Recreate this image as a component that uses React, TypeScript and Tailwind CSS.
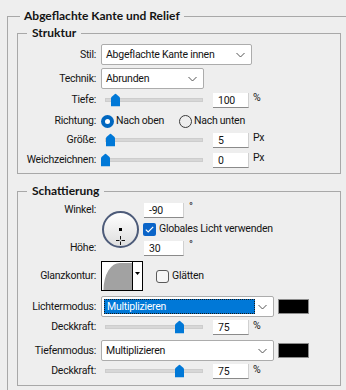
import React from "react";

function Chevron() {
  return (
    <svg width="9" height="5" viewBox="0 0 9 5" className="absolute right-[6px] top-1/2 -translate-y-1/2">
      <polyline points="0.5,0.5 4.5,4.5 8.5,0.5" fill="none" stroke="#555" strokeWidth="1" />
    </svg>
  );
}

function Label({ children }: { children: React.ReactNode }) {
  return <div className="w-[78px] shrink-0 text-right whitespace-nowrap">{children}</div>;
}

function Slider({ pos }: { pos: number }) {
  return (
    <div className="relative ml-[9px] w-[98px] h-full flex items-center shrink-0">
      <div className="w-full h-[4px] bg-[#d7d7d7] border border-[#cdcdcd]" />
      <svg width="9" height="13" viewBox="0 0 9 13" className="absolute top-1/2 -translate-y-1/2" style={{ left: pos }}>
        <path d="M4.5 0 L8.5 3.5 Q9 4 9 5 V13 H0 V5 Q0 4 0.5 3.5 Z" fill="#0078d7" />
      </svg>
    </div>
  );
}

function Num({ value, w = "w-[36px]" }: { value: string; w?: string }) {
  return (
    <div className={`${w} h-[15px] bg-white border-b border-r border-b-[#8a8a8a] border-r-[#d0d0d0] pl-[5px] leading-[15px] shrink-0`}>
      {value}
    </div>
  );
}

function SliderRow({ label, pos, value, unit, h }: { label: string; pos: number; value: string; unit: string; h: string }) {
  return (
    <div className={`flex items-center ${h}`}>
      <Label>{label}</Label>
      <Slider pos={pos} />
      <div className="ml-[10px]">
        <Num value={value} />
      </div>
      <div className="ml-[4px] self-start leading-[14px]">{unit}</div>
    </div>
  );
}

function Dropdown({ text, w, selected }: { text: string; w: string; selected?: boolean }) {
  return (
    <div className={`relative ml-[5px] h-[21px] bg-white border border-[#acacac] rounded-[2px] flex items-center shrink-0 ${w}`}>
      {selected ? (
        <div className="absolute left-[2px] top-[2px] bottom-[2px] right-[18px] bg-[#0078d7] border border-dotted border-[#1a1a1a] text-white pl-[2px] flex items-center">
          {text}
        </div>
      ) : (
        <div className="pl-[4px]">{text}</div>
      )}
      <Chevron />
    </div>
  );
}

function Swatch() {
  return <div className="ml-[4px] w-[31px] h-[15px] bg-black border border-[#8c8c8c] shrink-0" />;
}

function CheckedBox() {
  return (
    <div className="w-[13px] h-[13px] rounded-[2px] bg-[#0a64c8] flex items-center justify-center shrink-0">
      <svg width="9" height="7" viewBox="0 0 9 7">
        <polyline points="0.8,3.6 3.2,5.9 8.2,0.8" fill="none" stroke="white" strokeWidth="1.2" />
      </svg>
    </div>
  );
}

function EmptyBox() {
  return <div className="w-[13px] h-[13px] rounded-[3px] border border-[#5a5a5a] bg-[#f6f6f6] shrink-0" />;
}

export default function App() {
  return (
    <div className="w-[346px] h-[390px] overflow-hidden bg-[#eeeeee] text-[10.5px] tracking-[-0.25px] text-[#141414] font-['Roboto','Liberation_Sans',sans-serif] pt-[8px]">
      <fieldset className="ml-[7px] w-[360px] border border-[#a8a8a8] pb-[20px]">
        <legend className="ml-[12px] px-[4px] font-bold text-[12px] tracking-normal leading-[16px] font-['Lato',sans-serif]">Abgeflachte Kante und Relief</legend>

        {/* Struktur */}
        <fieldset className="mt-[1px] ml-[9px] w-[324px] border border-[#a8a8a8] pt-[3px] pb-[4px]">
          <legend className="ml-[9px] px-[5px] font-bold text-[12px] tracking-normal leading-[16px] font-['Lato',sans-serif]">Struktur</legend>
          <div className="flex items-center h-[21px]">
            <Label>Stil:</Label>
            <Dropdown text="Abgeflachte Kante innen" w="w-[151px]" />
          </div>
          <div className="flex items-center h-[21px] mt-[3px]">
            <Label>Technik:</Label>
            <Dropdown text="Abrunden" w="w-[103px]" />
          </div>
          <div className="mt-[2px]">
            <SliderRow label="Tiefe:" pos={6} value="100" unit="%" h="h-[18px]" />
          </div>
          <div className="flex items-center h-[20px] mt-[2px]">
            <Label>Richtung:</Label>
            <div className="ml-[5px] w-[13px] h-[13px] rounded-full bg-[#0067c0] flex items-center justify-center shrink-0">
              <div className="w-[5px] h-[5px] rounded-full bg-white" />
            </div>
            <div className="ml-[2px] w-[63px] shrink-0">Nach oben</div>
            <div className="w-[13px] h-[13px] rounded-full border border-[#3a3a3a] shrink-0" />
            <div className="ml-[2px]">Nach unten</div>
          </div>
          <SliderRow label="Größe:" pos={1} value="5" unit="Px" h="h-[18px]" />
          <div className="mt-[2px]">
            <SliderRow label="Weichzeichnen:" pos={-4} value="0" unit="Px" h="h-[18px]" />
          </div>
        </fieldset>

        {/* Schattierung */}
        <fieldset className="mt-[9px] ml-[9px] w-[324px] border border-[#a8a8a8] pt-[2px] pb-[6px]">
          <legend className="ml-[9px] px-[5px] font-bold text-[12px] tracking-normal leading-[16px] font-['Lato',sans-serif]">Schattierung</legend>

          <div className="flex h-[56px]">
            <div className="w-[78px] shrink-0 flex flex-col justify-between text-right">
              <div className="h-[18px] leading-[18px]">Winkel:</div>
              <div className="h-[18px] leading-[18px]">Höhe:</div>
            </div>
            <div className="w-[42px] ml-[5px] shrink-0">
              <div className="relative mt-[10px] ml-[1px] w-[37px] h-[37px] rounded-full border-2 border-[#4d5b79] bg-gradient-to-b from-[#ffffff] to-[#dedede]">
                <div className="absolute left-[15px] top-[15px] w-[3px] h-[3px] bg-black" />
                <svg width="9" height="9" viewBox="0 0 9 9" className="absolute left-[12px] top-[23px]">
                  <path d="M4.5 0 V3.5 M4.5 5.5 V9 M0 4.5 H3.5 M5.5 4.5 H9" stroke="#111" strokeWidth="1" />
                </svg>
              </div>
            </div>
            <div className="flex flex-col">
              <div className="h-[18px] flex items-center">
                <div className="ml-[1px]"><Num value="-90" w="w-[40px]" /></div>
                <div className="ml-[5px] self-start leading-[12px]">°</div>
              </div>
              <div className="h-[20px] flex items-center">
                <CheckedBox />
                <div className="ml-[3px] whitespace-nowrap">Globales Licht verwenden</div>
              </div>
              <div className="h-[18px] flex items-center">
                <div className="ml-[1px]"><Num value="30" w="w-[40px]" /></div>
                <div className="ml-[5px] self-start leading-[12px]">°</div>
              </div>
            </div>
          </div>

          <div className="flex items-center h-[30px] mt-[4px]">
            <Label>Glanzkontur:</Label>
            <div className="ml-[5px] w-[42px] h-[30px] border border-black bg-white flex shrink-0">
              <svg width="30" height="28" viewBox="0 0 30 28" className="shrink-0">
                <path d="M1.5 28 A16 27 0 0 1 18 1 L30 1 L30 28 Z" fill="#a2a2a2" />
              </svg>
              <div className="w-[1px] h-full bg-black" />
              <div className="flex-1 flex items-start justify-center pt-[10px]">
                <svg width="5" height="3" viewBox="0 0 5 3"><path d="M0 0 H5 L2.5 3 Z" fill="black" /></svg>
              </div>
            </div>
            <div className="ml-[13px]"><EmptyBox /></div>
            <div className="ml-[3px]">Glätten</div>
          </div>

          <div className="flex items-center h-[21px] mt-[5px]">
            <Label>Lichtermodus:</Label>
            <Dropdown text="Multiplizieren" w="w-[173px]" selected />
            <Swatch />
          </div>
          <div className="mt-[2px]">
            <SliderRow label="Deckkraft:" pos={70} value="75" unit="%" h="h-[16px]" />
          </div>
          <div className="flex items-center h-[21px] mt-[5px]">
            <Label>Tiefenmodus:</Label>
            <Dropdown text="Multiplizieren" w="w-[173px]" />
            <Swatch />
          </div>
          <div className="mt-[2px]">
            <SliderRow label="Deckkraft:" pos={70} value="75" unit="%" h="h-[16px]" />
          </div>
        </fieldset>
      </fieldset>
    </div>
  );
}
